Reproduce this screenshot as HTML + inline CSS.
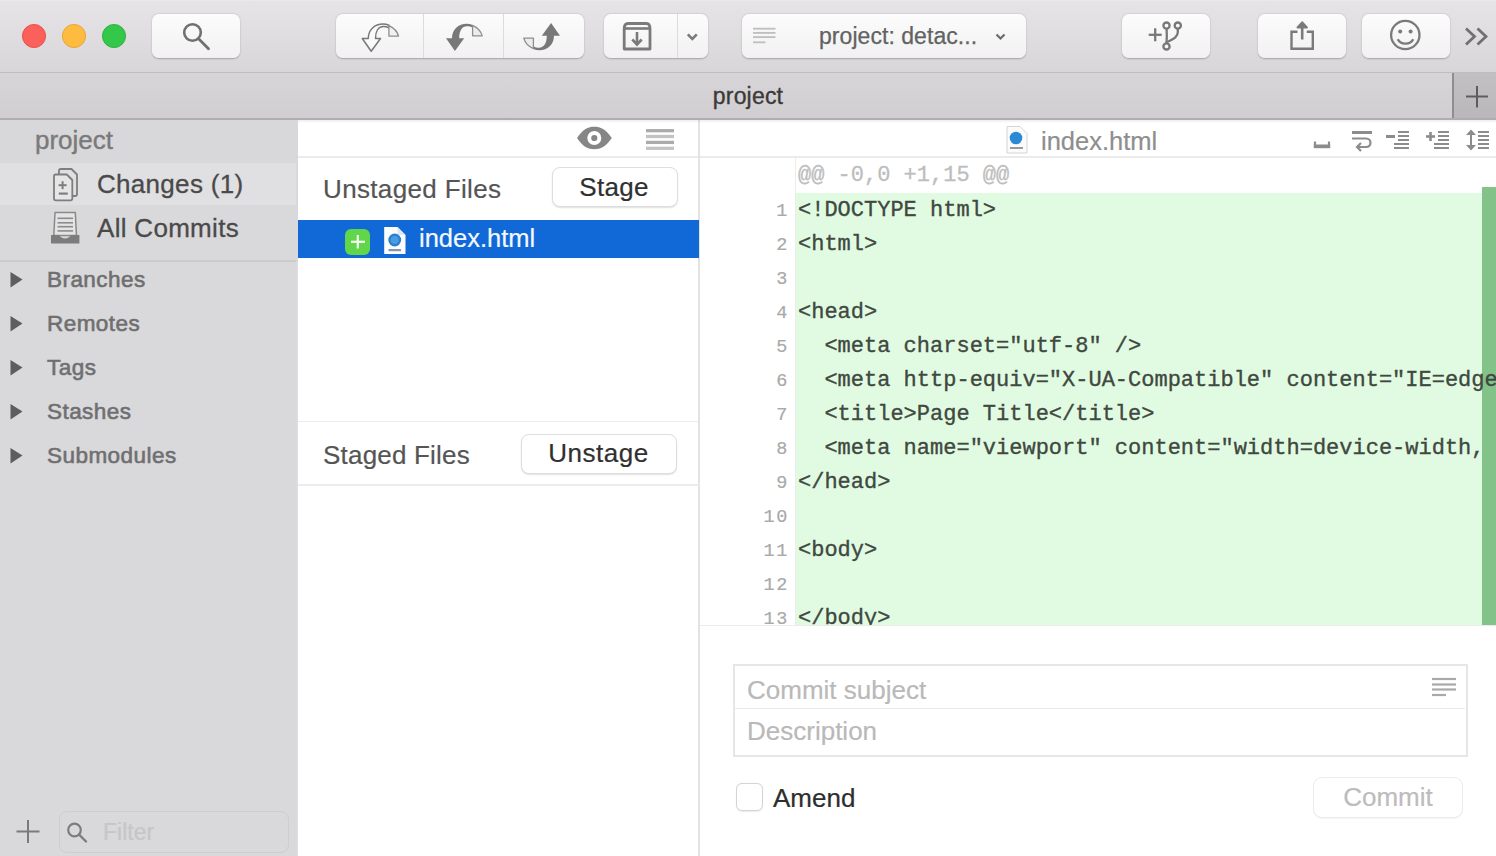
<!DOCTYPE html>
<html><head><meta charset="utf-8"><title>Tower</title>
<style>
html,body{margin:0;padding:0;width:1496px;height:856px;overflow:hidden;background:#fff;position:relative;font-family:"Liberation Sans", sans-serif;}
.t{position:absolute;white-space:nowrap;-webkit-text-stroke-width:0.2px;}
</style></head><body>
<div style="position:absolute;left:0px;top:0px;width:1496px;height:73px;background:linear-gradient(#e6e4e6,#d8d6d8);"></div>
<div style="position:absolute;left:0px;top:71.6px;width:1496px;height:2px;background:#bfbdbf;"></div>
<div style="position:absolute;left:0px;top:0px;width:1496px;height:1px;background:#ebe9eb;"></div>
<svg style="position:absolute;left:0px;top:0px;" width="140" height="72" viewBox="0 0 140 72">
<circle cx="34" cy="36" r="11.6" fill="#fc605b" stroke="#e2463f" stroke-width="0.8"/>
<circle cx="74" cy="36" r="11.6" fill="#fdbc40" stroke="#dfa023" stroke-width="0.8"/>
<circle cx="114" cy="36" r="11.6" fill="#34c84a" stroke="#25a936" stroke-width="0.8"/>
</svg>
<div style="position:absolute;left:152px;top:14px;width:88px;height:44px;background:linear-gradient(#fcfcfc,#f1f1f1);border-radius:7px;box-shadow:0 0.6px 1.8px rgba(0,0,0,0.26);"></div>
<svg style="position:absolute;left:152px;top:14px;" width="88" height="44" viewBox="0 0 88 44"><circle cx="40.5" cy="18.5" r="8.3" fill="none" stroke="#707070" stroke-width="2.6"/><line x1="46.6" y1="24.8" x2="56.5" y2="34.8" stroke="#707070" stroke-width="2.8" stroke-linecap="round"/></svg>
<div style="position:absolute;left:336px;top:14px;width:248px;height:44px;background:linear-gradient(#fcfcfc,#f1f1f1);border-radius:7px;box-shadow:0 0.6px 1.8px rgba(0,0,0,0.26);"></div>
<div style="position:absolute;left:423px;top:14px;width:1px;height:44px;background:#dcdcdc;"></div>
<div style="position:absolute;left:503px;top:14px;width:1px;height:44px;background:#dcdcdc;"></div>
<svg style="position:absolute;left:440px;top:18px;" width="50" height="38" viewBox="0 0 50 38"><path d="M6 20.2 L12 20.2 C12 11.5 18.5 5.8 26.6 5.8 C28.8 5.8 30.8 6.2 32.6 7 L32.6 9.6 C31 8.8 29 8.3 27 8.3 C22 8.3 19.2 13 19.2 20.2 L24.2 20.2 L14.9 32.9 Z" fill="#787878"/><path d="M32.6 7.3 C37.5 9.5 41 13 42.2 17.8 L32.6 17.8 Z" fill="#ececec" stroke="#8e8e8e" stroke-width="1.3" stroke-linejoin="round"/></svg>
<svg style="position:absolute;left:356px;top:18px;" width="50" height="38" viewBox="0 0 50 38"><g transform="translate(0.3,0.3)"><path d="M6 20.2 L12 20.2 C12 11.5 18.5 5.8 26.6 5.8 C28.8 5.8 30.8 6.2 32.6 7 L32.6 9.6 C31 8.8 29 8.3 27 8.3 C22 8.3 19.2 13 19.2 20.2 L24.2 20.2 L14.9 32.9 Z" fill="#fafafa" stroke="#787878" stroke-width="1.5" stroke-linejoin="round"/><path d="M32.6 7.3 C37.5 9.5 41 13 42.2 17.8 L32.6 17.8 Z" fill="#f2f2f2" stroke="#8e8e8e" stroke-width="1.3" stroke-linejoin="round"/></g></svg>
<svg style="position:absolute;left:518px;top:18px;" width="50" height="38" viewBox="0 0 50 38"><g transform="rotate(180 24 19)"><path d="M6 20.2 L12 20.2 C12 11.5 18.5 5.8 26.6 5.8 C28.8 5.8 30.8 6.2 32.6 7 L32.6 9.6 C31 8.8 29 8.3 27 8.3 C22 8.3 19.2 13 19.2 20.2 L24.2 20.2 L14.9 32.9 Z" fill="#787878"/><path d="M32.6 7.3 C37.5 9.5 41 13 42.2 17.8 L32.6 17.8 Z" fill="#ececec" stroke="#8e8e8e" stroke-width="1.3" stroke-linejoin="round"/></g></svg>
<div style="position:absolute;left:604px;top:14px;width:104px;height:44px;background:linear-gradient(#fcfcfc,#f1f1f1);border-radius:7px;box-shadow:0 0.6px 1.8px rgba(0,0,0,0.26);"></div>
<div style="position:absolute;left:677px;top:14px;width:1px;height:44px;background:#dcdcdc;"></div>
<svg style="position:absolute;left:610px;top:14px;" width="50" height="44" viewBox="0 0 50 44"><g fill="none" stroke="#7a7a7a" stroke-width="2.8" stroke-linejoin="round"><path d="M14.2 35 L14.2 15 C14.2 11 15.5 9.5 18 9.5 L36.5 9.5 C39 9.5 40 11 40 15 L40 35 Z"/><line x1="14.2" y1="14.5" x2="40" y2="14.5" stroke-width="2.6"/><line x1="27" y1="18" x2="27" y2="30.5" stroke-width="2.6"/><path d="M22.3 25.5 L27 30.5 L31.7 25.5" stroke-width="2.6" stroke-linejoin="miter"/></g></svg>
<svg style="position:absolute;left:680px;top:26px;" width="24" height="20" viewBox="0 0 24 20"><path d="M7.8 8.3 L12.3 12.8 L16.8 8.3" fill="none" stroke="#7a7a7a" stroke-width="2.6"/></svg>
<div style="position:absolute;left:742px;top:14px;width:284px;height:44px;background:linear-gradient(#fcfcfc,#f1f1f1);border-radius:7px;box-shadow:0 0.6px 1.8px rgba(0,0,0,0.26);"></div>
<svg style="position:absolute;left:750px;top:24px;" width="30" height="22" viewBox="0 0 30 22"><g stroke="#c0c0c0" stroke-width="1.9"><line x1="3" y1="4.7" x2="25.5" y2="4.7"/><line x1="3" y1="8.9" x2="25.5" y2="8.9"/><line x1="3" y1="13.1" x2="25.5" y2="13.1"/><line x1="3" y1="18.3" x2="15.5" y2="18.3"/></g></svg>
<div class="t" style="left:819px;top:24.53px;font-size:23px;line-height:23px;color:#626262;font-weight:normal;font-family:'Liberation Sans', sans-serif;-webkit-text-stroke:0.25px #626262;letter-spacing:0.05px;">project: detac...</div>
<svg style="position:absolute;left:991px;top:30px;" width="18" height="12" viewBox="0 0 18 12"><path d="M5.5 4.5 L9.5 8.5 L13.5 4.5" fill="none" stroke="#6c6c6c" stroke-width="2.2"/></svg>
<div style="position:absolute;left:1122px;top:14px;width:88px;height:44px;background:linear-gradient(#fcfcfc,#f1f1f1);border-radius:7px;box-shadow:0 0.6px 1.8px rgba(0,0,0,0.26);"></div>
<svg style="position:absolute;left:1140px;top:18px;" width="50" height="36" viewBox="0 0 50 36"><g stroke="#787878" stroke-width="2.3" fill="none"><line x1="8.7" y1="16.8" x2="21.7" y2="16.8"/><line x1="15.2" y1="10.3" x2="15.2" y2="23.3"/><circle cx="26.5" cy="7.6" r="3.1"/><circle cx="37.8" cy="7.6" r="3.1"/><circle cx="26.5" cy="28.4" r="3.1"/><path d="M26.6 10.7 L26.8 18 L26.5 25.3"/><path d="M37.8 10.7 L37.8 14 C37.8 19.5 33 21 27 24"/></g></svg>
<div style="position:absolute;left:1258px;top:14px;width:88px;height:44px;background:linear-gradient(#fcfcfc,#f1f1f1);border-radius:7px;box-shadow:0 0.6px 1.8px rgba(0,0,0,0.26);"></div>
<svg style="position:absolute;left:1280px;top:14px;" width="44" height="44" viewBox="0 0 44 44"><g stroke="#7a7a7a" stroke-width="2.4" fill="none"><path d="M17.5 17.8 L11.5 17.8 L11.5 34.8 L32.8 34.8 L32.8 17.8 L26.8 17.8"/><line x1="22.2" y1="9" x2="22.2" y2="25.5" stroke-width="2.6"/></g><path d="M17.6 13.4 L22.2 8.4 L26.8 13.4 Z" fill="#7a7a7a" stroke="#7a7a7a" stroke-width="2.2" stroke-linejoin="round"/></svg>
<div style="position:absolute;left:1362px;top:14px;width:88px;height:44px;background:linear-gradient(#fcfcfc,#f1f1f1);border-radius:7px;box-shadow:0 0.6px 1.8px rgba(0,0,0,0.26);"></div>
<svg style="position:absolute;left:1385px;top:14px;" width="42" height="42" viewBox="0 0 42 42"><g stroke="#7a7a7a" stroke-width="2.3" fill="none"><circle cx="20.3" cy="21" r="14.2"/><path d="M12.8 25.2 C15.5 31 25.5 31 28.2 25.2"/></g><circle cx="15.2" cy="17.5" r="2" fill="#7a7a7a"/><circle cx="25.6" cy="17.5" r="2" fill="#7a7a7a"/></svg>
<svg style="position:absolute;left:1460px;top:24px;" width="34" height="26" viewBox="0 0 34 26"><g stroke="#707070" stroke-width="2.8" fill="none"><path d="M6 4.5 L14.5 12.5 L6 20.5"/><path d="M17.5 4.5 L26 12.5 L17.5 20.5"/></g></svg>
<div style="position:absolute;left:0px;top:73px;width:1496px;height:46px;background:linear-gradient(#d7d5d7,#d0ced0);"></div>
<div style="position:absolute;left:0px;top:117.8px;width:1496px;height:2px;background:#afadaf;"></div>
<div class="t" style="left:448px;width:600px;text-align:center;top:84.53px;font-size:23px;line-height:23px;color:#3a3a3a;font-weight:normal;font-family:'Liberation Sans', sans-serif;-webkit-text-stroke:0.35px #3a3a3a;letter-spacing:0.2px;">project</div>
<div style="position:absolute;left:1452px;top:73px;width:44px;height:45px;background:linear-gradient(#c2c0c2,#b9b7b9);"></div>
<div style="position:absolute;left:1452px;top:73px;width:2px;height:45px;background:#8f8d8f;"></div>
<svg style="position:absolute;left:1452px;top:73px;" width="44" height="45" viewBox="0 0 44 45"><g stroke="#5e5c5e" stroke-width="2"><line x1="14" y1="23.5" x2="36" y2="23.5"/><line x1="25" y1="13" x2="25" y2="34.5"/></g></svg>
<div style="position:absolute;left:0px;top:119.5px;width:298px;height:736.5px;background:#d9d8da;"></div>
<div style="position:absolute;left:0px;top:119.5px;width:298px;height:43px;background:#d8d7d9;"></div>
<div style="position:absolute;left:0px;top:162.7px;width:296px;height:43px;background:#e0dfe1;"></div>
<div style="position:absolute;left:0px;top:205px;width:298px;height:50px;background:#d9d8da;"></div>
<div style="position:absolute;left:0px;top:260px;width:296px;height:2.2px;background:#cbcacc;"></div>
<div style="position:absolute;left:295.5px;top:262px;width:2.5px;height:594px;background:linear-gradient(90deg,#d9d9db,#dfdfe1);"></div>
<div class="t" style="left:35px;top:126.99px;font-size:26px;line-height:26px;color:#7a7a7a;font-weight:normal;font-family:'Liberation Sans', sans-serif;-webkit-text-stroke:0.4px #7a7a7a;">project</div>
<svg style="position:absolute;left:48px;top:164px;" width="36" height="42" viewBox="0 0 36 42"><g fill="none" stroke="#7e7e7e" stroke-width="1.8" stroke-linejoin="round"><path d="M11 10.5 L11 6.8 Q11 5 12.8 5 L23.5 5 L29 10.5 L29 30 Q29 32 27 32 L24.5 32"/><path d="M6 12.3 Q6 10.5 7.8 10.5 L18.8 10.5 L24.3 16 L24.3 34.6 Q24.3 36.4 22.5 36.4 L7.8 36.4 Q6 36.4 6 34.6 Z" fill="#e6e6e7"/><line x1="10.6" y1="21.2" x2="18.6" y2="21.2" stroke-width="2"/><line x1="14.6" y1="17.2" x2="14.6" y2="25.2" stroke-width="2"/><line x1="10.8" y1="29.6" x2="19.8" y2="29.6" stroke-width="2.2"/></g></svg>
<div class="t" style="left:97px;top:170.99px;font-size:26px;line-height:26px;color:#4a4a4a;font-weight:normal;font-family:'Liberation Sans', sans-serif;-webkit-text-stroke:0.3px #4a4a4a;letter-spacing:0.3px;">Changes (1)</div>
<svg style="position:absolute;left:48px;top:208px;" width="36" height="40" viewBox="0 0 36 40"><path d="M7 4.5 L27.3 4.5 L28.5 27.5 L5.8 27.5 Z" fill="#e4e4e5" stroke="#8a8a8a" stroke-width="1.5" stroke-linejoin="round"/><g stroke="#8c8c8c" stroke-width="1.6"><line x1="9.5" y1="10.3" x2="25" y2="10.3"/><line x1="9.5" y1="14.8" x2="25" y2="14.8"/><line x1="9.5" y1="18.7" x2="25" y2="18.7"/><line x1="9.5" y1="22.9" x2="25" y2="22.9"/></g><path d="M3 27 L11.5 27 C12.5 31.5 21.5 31.5 22.5 27 L31.4 27 L31.4 35.5 L3 35.5 Z" fill="#7c7c7c"/></svg>
<div class="t" style="left:97px;top:214.99px;font-size:26px;line-height:26px;color:#4a4a4a;font-weight:normal;font-family:'Liberation Sans', sans-serif;-webkit-text-stroke:0.3px #4a4a4a;letter-spacing:0.3px;">All Commits</div>
<svg style="position:absolute;left:10px;top:271px;" width="14" height="19" viewBox="0 0 14 19"><path d="M0.5 1 L12.5 8.5 L0.5 16.5 Z" fill="#5d5d5f"/></svg>
<div class="t" style="left:47px;top:268.95px;font-size:22.5px;line-height:22.5px;color:#6f6f71;font-weight:normal;font-family:'Liberation Sans', sans-serif;-webkit-text-stroke:0.6px #6f6f71;letter-spacing:0.45px;">Branches</div>
<svg style="position:absolute;left:10px;top:315px;" width="14" height="19" viewBox="0 0 14 19"><path d="M0.5 1 L12.5 8.5 L0.5 16.5 Z" fill="#5d5d5f"/></svg>
<div class="t" style="left:47px;top:312.95px;font-size:22.5px;line-height:22.5px;color:#6f6f71;font-weight:normal;font-family:'Liberation Sans', sans-serif;-webkit-text-stroke:0.6px #6f6f71;letter-spacing:0.45px;">Remotes</div>
<svg style="position:absolute;left:10px;top:359px;" width="14" height="19" viewBox="0 0 14 19"><path d="M0.5 1 L12.5 8.5 L0.5 16.5 Z" fill="#5d5d5f"/></svg>
<div class="t" style="left:47px;top:356.95px;font-size:22.5px;line-height:22.5px;color:#6f6f71;font-weight:normal;font-family:'Liberation Sans', sans-serif;-webkit-text-stroke:0.6px #6f6f71;letter-spacing:0.45px;">Tags</div>
<svg style="position:absolute;left:10px;top:403px;" width="14" height="19" viewBox="0 0 14 19"><path d="M0.5 1 L12.5 8.5 L0.5 16.5 Z" fill="#5d5d5f"/></svg>
<div class="t" style="left:47px;top:400.95px;font-size:22.5px;line-height:22.5px;color:#6f6f71;font-weight:normal;font-family:'Liberation Sans', sans-serif;-webkit-text-stroke:0.6px #6f6f71;letter-spacing:0.45px;">Stashes</div>
<svg style="position:absolute;left:10px;top:447px;" width="14" height="19" viewBox="0 0 14 19"><path d="M0.5 1 L12.5 8.5 L0.5 16.5 Z" fill="#5d5d5f"/></svg>
<div class="t" style="left:47px;top:444.95px;font-size:22.5px;line-height:22.5px;color:#6f6f71;font-weight:normal;font-family:'Liberation Sans', sans-serif;-webkit-text-stroke:0.6px #6f6f71;letter-spacing:0.45px;">Submodules</div>
<svg style="position:absolute;left:14px;top:818px;" width="28" height="28" viewBox="0 0 28 28"><g stroke="#7a7a7a" stroke-width="2"><line x1="2.5" y1="13.5" x2="25.5" y2="13.5"/><line x1="14" y1="2" x2="14" y2="25"/></g></svg>
<div style="position:absolute;left:59px;top:811px;width:230px;height:42px;border:1.5px solid #cfcecf;border-radius:8px;box-sizing:border-box;background:#d9d8da;"></div>
<svg style="position:absolute;left:64px;top:820px;" width="28" height="28" viewBox="0 0 28 28"><circle cx="10.5" cy="10" r="6.3" fill="none" stroke="#7d7d7d" stroke-width="2.2"/><line x1="15" y1="14.5" x2="22" y2="21.5" stroke="#7d7d7d" stroke-width="2.4" stroke-linecap="round"/></svg>
<div class="t" style="left:103px;top:820.53px;font-size:23px;line-height:23px;color:#c6c6c7;font-weight:normal;font-family:'Liberation Sans', sans-serif;">Filter</div>
<div style="position:absolute;left:298px;top:119.5px;width:401px;height:736.5px;background:#ffffff;"></div>
<div style="position:absolute;left:298px;top:156px;width:401px;height:1.5px;background:#ebebeb;"></div>
<div style="position:absolute;left:698px;top:119.5px;width:1.5px;height:736.5px;background:#e3e3e3;"></div>
<svg style="position:absolute;left:574px;top:124px;" width="42" height="28" viewBox="0 0 42 28"><path d="M3 14 C9 5 14 2.8 20.3 2.8 C26.6 2.8 31.6 5 37.8 14 C31.6 23 26.6 25.2 20.3 25.2 C14 25.2 9 23 3 14 Z" fill="#868686"/><circle cx="20.3" cy="14" r="7" fill="#fff"/><circle cx="20.3" cy="14" r="3.1" fill="#868686"/></svg>
<svg style="position:absolute;left:644px;top:126px;" width="32" height="26" viewBox="0 0 32 26"><g stroke-width="3.3"><line x1="2" y1="4.7" x2="30" y2="4.7" stroke="#ababab"/><line x1="2" y1="10.5" x2="30" y2="10.5" stroke="#c3c3c3"/><line x1="2" y1="16.4" x2="30" y2="16.4" stroke="#ababab"/><line x1="2" y1="22.3" x2="30" y2="22.3" stroke="#c3c3c3"/></g></svg>
<div class="t" style="left:323px;top:175.99px;font-size:26px;line-height:26px;color:#555555;font-weight:normal;font-family:'Liberation Sans', sans-serif;letter-spacing:0.35px;-webkit-text-stroke:0.2px #555;">Unstaged Files</div>
<div style="position:absolute;left:551.5px;top:167px;width:126px;height:40px;background:#fff;border:1.5px solid #dedede;border-radius:8px;box-sizing:border-box;box-shadow:0 1px 1.5px rgba(0,0,0,0.12);"></div>
<div class="t" style="left:314px;width:600px;text-align:center;top:173.99px;font-size:26px;line-height:26px;color:#303030;font-weight:normal;font-family:'Liberation Sans', sans-serif;letter-spacing:0.3px;-webkit-text-stroke:0.2px #303030;">Stage</div>
<div style="position:absolute;left:298px;top:220px;width:400.5px;height:37.5px;background:#1069d7;"></div>
<div style="position:absolute;left:344.5px;top:228.5px;width:25.5px;height:26px;background:#62d64a;border-radius:6px;"></div>
<svg style="position:absolute;left:344.5px;top:228.5px;" width="26" height="26" viewBox="0 0 26 26"><g stroke="#f4fff0" stroke-width="2.2"><line x1="6" y1="12.8" x2="20" y2="12.8"/><line x1="12.8" y1="6" x2="12.8" y2="19.5"/></g></svg>
<svg style="position:absolute;left:383px;top:226px;" width="24" height="30" viewBox="0 0 24 30"><path d="M1.2 1 L14.5 1 L22.5 9 L22.5 28 L1.2 28 Z" fill="#fbfdff"/><path d="M14.5 1 L14.5 9 L22.5 9" fill="#dfe6ee"/><circle cx="11.7" cy="14" r="6.4" fill="#2b7fcf"/><circle cx="11.7" cy="14" r="4" fill="#4a9be0"/><rect x="5.5" y="23" width="12.5" height="2.2" fill="#8796a8"/></svg>
<div class="t" style="left:419px;top:226.41px;font-size:25.5px;line-height:25.5px;color:#f4f8ff;font-weight:normal;font-family:'Liberation Sans', sans-serif;">index.html</div>
<div style="position:absolute;left:298px;top:420.5px;width:401px;height:1.5px;background:#ececec;"></div>
<div class="t" style="left:323px;top:441.99px;font-size:26px;line-height:26px;color:#555555;font-weight:normal;font-family:'Liberation Sans', sans-serif;letter-spacing:0.2px;-webkit-text-stroke:0.2px #555;">Staged Files</div>
<div style="position:absolute;left:521px;top:433.5px;width:156px;height:40px;background:#fff;border:1.5px solid #dedede;border-radius:8px;box-sizing:border-box;box-shadow:0 1px 1.5px rgba(0,0,0,0.12);"></div>
<div class="t" style="left:298.5px;width:600px;text-align:center;top:439.99px;font-size:26px;line-height:26px;color:#303030;font-weight:normal;font-family:'Liberation Sans', sans-serif;letter-spacing:0.5px;-webkit-text-stroke:0.2px #303030;">Unstage</div>
<div style="position:absolute;left:298px;top:484px;width:401px;height:1.5px;background:#ececec;"></div>
<div style="position:absolute;left:699.5px;top:119.5px;width:796.5px;height:736.5px;background:#ffffff;"></div>
<div style="position:absolute;left:699.5px;top:156px;width:796.5px;height:1.5px;background:#ebebeb;"></div>
<svg style="position:absolute;left:1005px;top:125px;" width="24" height="30" viewBox="0 0 24 30"><path d="M2 1.5 L15 1.5 L22 8.5 L22 28 L2 28 Z" fill="#fbfbfb" stroke="#d4d4d4" stroke-width="1"/><circle cx="11" cy="13" r="6.3" fill="#2a8ad6"/><rect x="5" y="22" width="13" height="2" fill="#9a9a9a"/></svg>
<div class="t" style="left:1041px;top:129.21px;font-size:25.5px;line-height:25.5px;color:#8e8e8e;font-weight:normal;font-family:'Liberation Sans', sans-serif;-webkit-text-stroke:0.2px #8e8e8e;">index.html</div>
<svg style="position:absolute;left:1310px;top:126px;" width="24" height="28" viewBox="0 0 24 28"><path d="M5 15.5 L5 21 L19 21 L19 15.5" fill="none" stroke="#8c8c8c" stroke-width="2.2"/><rect x="3.8" y="18.5" width="16.4" height="3.7" fill="#8c8c8c"/></svg>
<svg style="position:absolute;left:1348px;top:126px;" width="28" height="30" viewBox="0 0 28 30"><g fill="none" stroke="#8c8c8c" stroke-width="2.2"><line x1="4" y1="6.5" x2="24" y2="6.5" stroke-width="3"/><path d="M4 12.5 L18 12.5 C24 12.5 24 21 18 21 L10 21"/><path d="M13 17 L9 21 L13 25"/></g></svg>
<svg style="position:absolute;left:1384px;top:126px;" width="28" height="28" viewBox="0 0 28 28"><g stroke="#8c8c8c" stroke-width="2"><line x1="2" y1="10.5" x2="11" y2="10.5" stroke-width="3"/><line x1="14" y1="6" x2="25" y2="6"/><line x1="14" y1="10" x2="25" y2="10"/><line x1="14" y1="14" x2="25" y2="14"/><line x1="10" y1="18" x2="25" y2="18"/><line x1="10" y1="22" x2="25" y2="22"/></g></svg>
<svg style="position:absolute;left:1424px;top:126px;" width="28" height="28" viewBox="0 0 28 28"><g stroke="#8c8c8c" stroke-width="2"><line x1="2" y1="10.5" x2="11" y2="10.5" stroke-width="2.6"/><line x1="6.5" y1="6" x2="6.5" y2="15" stroke-width="2.6"/><line x1="14" y1="6" x2="25" y2="6"/><line x1="14" y1="10" x2="25" y2="10"/><line x1="14" y1="14" x2="25" y2="14"/><line x1="10" y1="18" x2="25" y2="18"/><line x1="10" y1="22" x2="25" y2="22"/></g></svg>
<svg style="position:absolute;left:1464px;top:126px;" width="28" height="28" viewBox="0 0 28 28"><g stroke="#8c8c8c" stroke-width="2"><line x1="14" y1="6" x2="25" y2="6"/><line x1="14" y1="10" x2="25" y2="10"/><line x1="14" y1="14" x2="25" y2="14"/><line x1="14" y1="18" x2="25" y2="18"/><line x1="14" y1="22" x2="25" y2="22"/><line x1="7" y1="8" x2="7" y2="20"/></g><path d="M2 9 L7 3.5 L12 9 Z M2 19 L7 24.5 L12 19 Z" fill="#8c8c8c"/></svg>
<div style="position:absolute;left:794.5px;top:157.5px;width:1.5px;height:467.5px;background:#ececec;"></div>
<div style="position:absolute;left:796px;top:192.5px;width:686px;height:432.5px;background:#e1fbe3;"></div>
<div style="position:absolute;left:1482px;top:187px;width:14px;height:438px;background:#83c38a;"></div>
<div style="position:absolute;left:699.5px;top:624.5px;width:796.5px;height:1.5px;background:#ebebeb;"></div>
<div style="position:absolute;left:699.5px;top:157.5px;width:796.5px;height:467px;overflow:hidden;">
<div class="t" style="left:98.5px;top:7.65px;font-size:22px;line-height:22px;color:#bdbdbd;font-weight:normal;font-family:'Liberation Mono', monospace;white-space:pre;-webkit-text-stroke:0.3px #bdbdbd;">@@ -0,0 +1,15 @@</div>
<div class="t" style="left:-110.5px;width:200px;text-align:right;top:45.33px;font-size:18.5px;line-height:18.5px;color:#a9a9a9;font-weight:normal;font-family:'Liberation Mono', monospace;letter-spacing:1.6px;">1</div>
<div class="t" style="left:98.5px;top:42.65px;font-size:22px;line-height:22px;color:#404840;font-weight:normal;font-family:'Liberation Mono', monospace;white-space:pre;-webkit-text-stroke:0.35px #404840;">&lt;!DOCTYPE html&gt;</div>
<div class="t" style="left:-110.5px;width:200px;text-align:right;top:79.33px;font-size:18.5px;line-height:18.5px;color:#a9a9a9;font-weight:normal;font-family:'Liberation Mono', monospace;letter-spacing:1.6px;">2</div>
<div class="t" style="left:98.5px;top:76.65px;font-size:22px;line-height:22px;color:#404840;font-weight:normal;font-family:'Liberation Mono', monospace;white-space:pre;-webkit-text-stroke:0.35px #404840;">&lt;html&gt;</div>
<div class="t" style="left:-110.5px;width:200px;text-align:right;top:113.33px;font-size:18.5px;line-height:18.5px;color:#a9a9a9;font-weight:normal;font-family:'Liberation Mono', monospace;letter-spacing:1.6px;">3</div>
<div class="t" style="left:98.5px;top:110.65px;font-size:22px;line-height:22px;color:#404840;font-weight:normal;font-family:'Liberation Mono', monospace;white-space:pre;-webkit-text-stroke:0.35px #404840;"></div>
<div class="t" style="left:-110.5px;width:200px;text-align:right;top:147.33px;font-size:18.5px;line-height:18.5px;color:#a9a9a9;font-weight:normal;font-family:'Liberation Mono', monospace;letter-spacing:1.6px;">4</div>
<div class="t" style="left:98.5px;top:144.65px;font-size:22px;line-height:22px;color:#404840;font-weight:normal;font-family:'Liberation Mono', monospace;white-space:pre;-webkit-text-stroke:0.35px #404840;">&lt;head&gt;</div>
<div class="t" style="left:-110.5px;width:200px;text-align:right;top:181.33px;font-size:18.5px;line-height:18.5px;color:#a9a9a9;font-weight:normal;font-family:'Liberation Mono', monospace;letter-spacing:1.6px;">5</div>
<div class="t" style="left:98.5px;top:178.65px;font-size:22px;line-height:22px;color:#404840;font-weight:normal;font-family:'Liberation Mono', monospace;white-space:pre;-webkit-text-stroke:0.35px #404840;">  &lt;meta charset="utf-8" /&gt;</div>
<div class="t" style="left:-110.5px;width:200px;text-align:right;top:215.33px;font-size:18.5px;line-height:18.5px;color:#a9a9a9;font-weight:normal;font-family:'Liberation Mono', monospace;letter-spacing:1.6px;">6</div>
<div class="t" style="left:98.5px;top:212.65px;font-size:22px;line-height:22px;color:#404840;font-weight:normal;font-family:'Liberation Mono', monospace;white-space:pre;-webkit-text-stroke:0.35px #404840;">  &lt;meta http-equiv="X-UA-Compatible" content="IE=edge"&gt;</div>
<div class="t" style="left:-110.5px;width:200px;text-align:right;top:249.33px;font-size:18.5px;line-height:18.5px;color:#a9a9a9;font-weight:normal;font-family:'Liberation Mono', monospace;letter-spacing:1.6px;">7</div>
<div class="t" style="left:98.5px;top:246.65px;font-size:22px;line-height:22px;color:#404840;font-weight:normal;font-family:'Liberation Mono', monospace;white-space:pre;-webkit-text-stroke:0.35px #404840;">  &lt;title&gt;Page Title&lt;/title&gt;</div>
<div class="t" style="left:-110.5px;width:200px;text-align:right;top:283.33px;font-size:18.5px;line-height:18.5px;color:#a9a9a9;font-weight:normal;font-family:'Liberation Mono', monospace;letter-spacing:1.6px;">8</div>
<div class="t" style="left:98.5px;top:280.65px;font-size:22px;line-height:22px;color:#404840;font-weight:normal;font-family:'Liberation Mono', monospace;white-space:pre;-webkit-text-stroke:0.35px #404840;">  &lt;meta name="viewport" content="width=device-width, initial-scale=1"&gt;</div>
<div class="t" style="left:-110.5px;width:200px;text-align:right;top:317.33px;font-size:18.5px;line-height:18.5px;color:#a9a9a9;font-weight:normal;font-family:'Liberation Mono', monospace;letter-spacing:1.6px;">9</div>
<div class="t" style="left:98.5px;top:314.65px;font-size:22px;line-height:22px;color:#404840;font-weight:normal;font-family:'Liberation Mono', monospace;white-space:pre;-webkit-text-stroke:0.35px #404840;">&lt;/head&gt;</div>
<div class="t" style="left:-110.5px;width:200px;text-align:right;top:351.33px;font-size:18.5px;line-height:18.5px;color:#a9a9a9;font-weight:normal;font-family:'Liberation Mono', monospace;letter-spacing:1.6px;">10</div>
<div class="t" style="left:98.5px;top:348.65px;font-size:22px;line-height:22px;color:#404840;font-weight:normal;font-family:'Liberation Mono', monospace;white-space:pre;-webkit-text-stroke:0.35px #404840;"></div>
<div class="t" style="left:-110.5px;width:200px;text-align:right;top:385.33px;font-size:18.5px;line-height:18.5px;color:#a9a9a9;font-weight:normal;font-family:'Liberation Mono', monospace;letter-spacing:1.6px;">11</div>
<div class="t" style="left:98.5px;top:382.65px;font-size:22px;line-height:22px;color:#404840;font-weight:normal;font-family:'Liberation Mono', monospace;white-space:pre;-webkit-text-stroke:0.35px #404840;">&lt;body&gt;</div>
<div class="t" style="left:-110.5px;width:200px;text-align:right;top:419.33px;font-size:18.5px;line-height:18.5px;color:#a9a9a9;font-weight:normal;font-family:'Liberation Mono', monospace;letter-spacing:1.6px;">12</div>
<div class="t" style="left:98.5px;top:416.65px;font-size:22px;line-height:22px;color:#404840;font-weight:normal;font-family:'Liberation Mono', monospace;white-space:pre;-webkit-text-stroke:0.35px #404840;"></div>
<div class="t" style="left:-110.5px;width:200px;text-align:right;top:453.33px;font-size:18.5px;line-height:18.5px;color:#a9a9a9;font-weight:normal;font-family:'Liberation Mono', monospace;letter-spacing:1.6px;">13</div>
<div class="t" style="left:98.5px;top:450.65px;font-size:22px;line-height:22px;color:#404840;font-weight:normal;font-family:'Liberation Mono', monospace;white-space:pre;-webkit-text-stroke:0.35px #404840;">&lt;/body&gt;</div>
</div>
<div style="position:absolute;left:298px;top:119.5px;width:1198px;height:3px;background:linear-gradient(rgba(0,0,0,0.07),rgba(0,0,0,0));"></div>
<div style="position:absolute;left:733px;top:663.5px;width:734.5px;height:93px;border:2.5px solid #e6e6e6;box-sizing:border-box;"></div>
<div style="position:absolute;left:735px;top:707.5px;width:730px;height:1.5px;background:#e9e9e9;"></div>
<svg style="position:absolute;left:1428px;top:674px;" width="32" height="26" viewBox="0 0 32 26"><g stroke="#a9a9a9" stroke-width="2.2"><line x1="4" y1="5" x2="28" y2="5"/><line x1="4" y1="10.5" x2="28" y2="10.5"/><line x1="4" y1="15.5" x2="28" y2="15.5"/><line x1="4" y1="21" x2="18" y2="21"/></g></svg>
<div class="t" style="left:747px;top:676.99px;font-size:26px;line-height:26px;color:#b9b9b9;font-weight:normal;font-family:'Liberation Sans', sans-serif;">Commit subject</div>
<div class="t" style="left:747px;top:717.99px;font-size:26px;line-height:26px;color:#b9b9b9;font-weight:normal;font-family:'Liberation Sans', sans-serif;">Description</div>
<div style="position:absolute;left:736px;top:783px;width:27px;height:27.5px;border:1.5px solid #d4d4d4;border-radius:6px;box-sizing:border-box;background:#fff;box-shadow:0 0.5px 1px rgba(0,0,0,0.08);"></div>
<div class="t" style="left:773px;top:784.99px;font-size:26px;line-height:26px;color:#2e2e2e;font-weight:normal;font-family:'Liberation Sans', sans-serif;">Amend</div>
<div style="position:absolute;left:1313px;top:776.5px;width:150px;height:41px;border:1.5px solid #ececec;border-radius:9px;box-sizing:border-box;background:#fff;box-shadow:0 1px 1px rgba(0,0,0,0.05);"></div>
<div class="t" style="left:1088px;width:600px;text-align:center;top:783.99px;font-size:26px;line-height:26px;color:#bcbcbc;font-weight:normal;font-family:'Liberation Sans', sans-serif;">Commit</div>
</body></html>
